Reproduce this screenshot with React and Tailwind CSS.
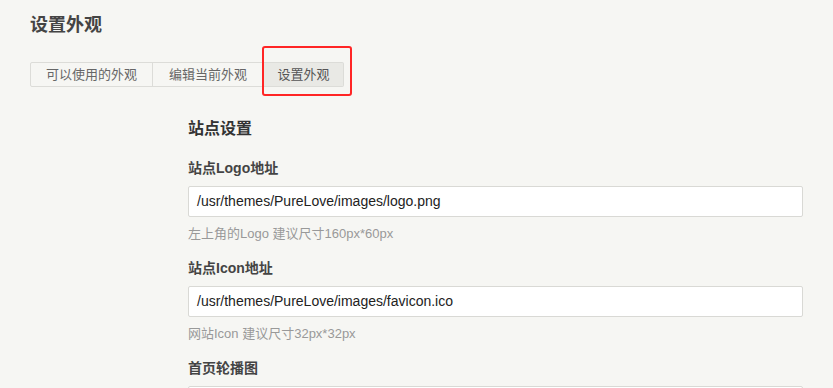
export default function App() {
  const font = { fontFamily: '"Liberation Sans", Arial, "Noto Sans CJK SC", sans-serif' };
  const fields = [
    { label: "站点Logo地址", value: "/usr/themes/PureLove/images/logo.png", hint: "左上角的Logo 建议尺寸160px*60px" },
    { label: "站点Icon地址", value: "/usr/themes/PureLove/images/favicon.ico", hint: "网站Icon 建议尺寸32px*32px" },
    { label: "首页轮播图", value: "", hint: "" },
  ];
  return (
    <div className="w-[833px] h-[388px] overflow-hidden bg-[#f6f6f3]" style={font}>
      <div className="pl-[30px] pt-[13px]">
        <h1 className="text-[18px] leading-[24px] font-bold text-[#444]">设置外观</h1>
        <div className="relative mt-[25px] flex h-[25px] w-fit text-[13px] text-[#666]">
          <div className="flex w-[234px] rounded-l-[2px] border border-[#dcdcd8] bg-[#f6f6f3]">
            <div className="flex w-[122px] items-center justify-center border-r border-[#dcdcd8]">可以使用的外观</div>
            <div className="flex flex-1 items-center justify-center">编辑当前外观</div>
          </div>
          <div className="flex w-[80px] items-center justify-center rounded-r-[2px] border border-l-0 border-[#dcdcd8] bg-[#e9e9e5] text-[#555]">设置外观</div>
          <div className="absolute left-[232px] top-[-16px] h-[50px] w-[90px] rounded-[3px] border-[2.5px] border-[#ff2525]" />
        </div>
      </div>
      <div className="ml-[188px] mt-[30px] w-[615px]">
        <h2 className="text-[16px] leading-[24px] font-bold text-[#333]">站点设置</h2>
        <div className="mt-[17px]">
          {fields.map((f, i) => (
            <div key={i} className="h-[100px]">
              <div className="text-[14px] leading-[20px] font-bold text-[#444]">{f.label}</div>
              <div className="mt-[8px] flex h-[31px] items-center rounded-[2px] border border-[#d9d9d5] bg-white px-[8px] text-[14px] text-[#222]">
                {f.value}
              </div>
              <div className="mt-[7px] text-[13px] leading-[20px] text-[#999]">{f.hint}</div>
            </div>
          ))}
        </div>
      </div>
    </div>
  );
}
